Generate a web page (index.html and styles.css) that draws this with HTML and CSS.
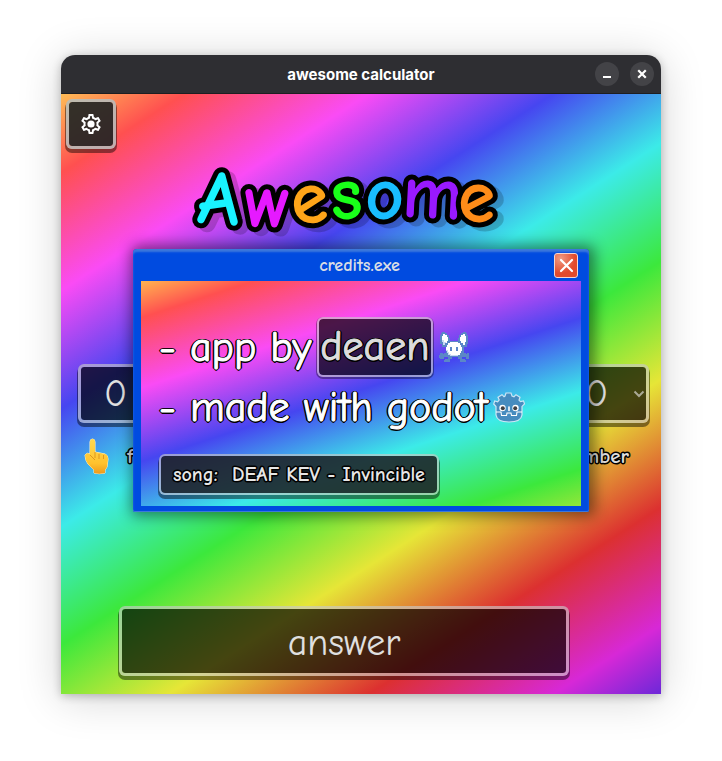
FILE: index.html
```html
<!DOCTYPE html>
<html lang="en">
<head>
<meta charset="utf-8">
<title>awesome calculator</title>
<link rel="stylesheet" href="styles.css">
</head>
<body>
<div class="window">
  <header class="titlebar">
    <h1 class="titlebar-text">awesome calculator</h1>
    <div class="titlebar-actions">
      <button class="round-button" aria-label="Minimize">
        <svg width="24" height="24" viewBox="0 0 24 24"><rect x="8" y="14" width="8" height="2" fill="#fff"/></svg>
      </button>
      <button class="round-button" aria-label="Close">
        <svg width="24" height="24" viewBox="0 0 24 24"><path d="M9 9l6 6M15 9l-6 6" stroke="#fff" stroke-width="2.200" stroke-linecap="square"/></svg>
      </button>
    </div>
  </header>
  <main class="canvas">
    <button class="panel gear" aria-label="Settings">
      <svg width="24" height="24" viewBox="0 0 24 24" fill="#fff"><path fill-rule="evenodd" d="M19.430 12.980c.04-.32.07-.64.07-.98 0-.34-.03-.66-.07-.98l2.110-1.650c.19-.15.24-.42.12-.64l-2-3.460a.5.5 0 0 0-.61-.22l-2.490 1c-.52-.4-1.080-.73-1.690-.98l-.38-2.650A.49.49 0 0 0 14 2h-4c-.25 0-.46.18-.49.42l-.38 2.650c-.61.25-1.170.59-1.690.98l-2.490-1a.5.5 0 0 0-.61.22l-2 3.460c-.13.22-.07.49.12.64l2.110 1.650c-.04.32-.07.65-.07.98s.03.66.07.98l-2.110 1.650c-.19.15-.24.42-.12.64l2 3.460c.12.22.39.3.61.22l2.490-1c.52.4 1.080.73 1.690.98l.38 2.650c.03.24.24.42.49.42h4c.25 0 .46-.18.49-.42l.38-2.650c.61-.25 1.170-.59 1.690-.98l2.490 1c.23.09.49 0 .61-.22l2-3.460c.12-.22.07-.49-.12-.64l-2.110-1.650zm-1.980-1.710c.04.31.05.52.05.73s-.02.43-.05.73l-.14 1.130.89.7 1.080.84-.7 1.210-1.270-.51-1.040-.42-.9.68c-.43.32-.84.56-1.250.73l-1.060.43-.16 1.130-.2 1.350h-1.400l-.19-1.350-.16-1.130-1.060-.43c-.43-.18-.83-.41-1.230-.71l-.91-.7-1.060.43-1.270.51-.7-1.210 1.080-.84.89-.7-.14-1.130c-.03-.31-.05-.54-.05-.74s.02-.43.05-.73l.14-1.130-.89-.7-1.080-.84.7-1.210 1.270.51 1.040.42.9-.68c.43-.32.84-.56 1.250-.73l1.060-.43.16-1.130.2-1.350h1.390l.19 1.350.16 1.130 1.060.43c.43.18.83.41 1.230.71l.91.7 1.060-.43 1.270-.51.7 1.210-1.070.85-.89.7z"/><circle cx="12" cy="12" r="3.600"/></svg>
    </button>
    <svg class="logo" viewBox="184 155 320 90" role="img" aria-label="Awesome">
      <g class="logo-letters">
        <text x="198" y="225" fill="#19f4ff" transform="rotate(4 219 200)">A</text>
        <text x="244" y="228" fill="#e619ff" transform="rotate(1 268 208)">w</text>
        <text x="291" y="224" fill="#ffa519" transform="rotate(-3 311 205)">e</text>
        <text x="330" y="220" fill="#19ff19" transform="rotate(-6 347 200)">s</text>
        <text x="365" y="220" fill="#19beff" transform="rotate(-1 383 200)">o</text>
        <text x="402" y="219" fill="#9919ff" transform="rotate(3 428 200)">m</text>
        <text x="458" y="223" fill="#ff8c19" transform="rotate(2 476 204)">e</text>
      </g>
    </svg>
    <div class="numbers">
      <div class="field">
        <select class="panel number" id="first"><option>0</option></select>
        <label class="outlined hint" for="first">
          <svg width="28" height="38" viewBox="0 0 28 38" aria-hidden="true"><defs><linearGradient id="skin" x1="0" y1="0" x2="0" y2="1"><stop offset="0" stop-color="#ffd94f"/><stop offset=".7" stop-color="#ffc22d"/><stop offset="1" stop-color="#ee9a1c"/></linearGradient></defs><path fill="url(#skin)" stroke="#fff2c8" d="M7 5q0-3 2.500-3T12 5v10l10 2q3 1 3 5l-1 8-2 3v3q-6 1.500-11 0v-3l-6-6q-3-4-3-9 2-3 5-1z"/><path fill="none" stroke="#df971e" d="M7 18l5 5M12 15v6M16 17v5M20.500 18v4"/></svg>
          <span>first</span>
        </label>
      </div>
      <div class="field field-end">
        <select class="panel number number-last" id="last"><option>0</option></select>
        <label class="outlined hint" for="last">number</label>
        <svg class="chevron" width="12" height="8" viewBox="0 0 12 8"><path d="M1.500 1.500L6 6l4.500-4.500" fill="none" stroke="#aaa995" stroke-width="2"/></svg>
      </div>
    </div>
    <input class="panel answer" type="text" aria-label="Answer" value="answer" readonly>

    <section class="dialog" role="dialog" aria-labelledby="credits-title">
      <header class="dialog-bar">
        <h2 class="dialog-title" id="credits-title">credits.exe</h2>
        <button class="dialog-close" aria-label="Close credits">
          <svg width="21" height="21" viewBox="0 0 21 21"><path d="M5 5l11 11M16 5L5 16" stroke="#fff" stroke-width="2.200" stroke-linecap="round"/></svg>
        </button>
      </header>
      <div class="dialog-body">
        <p class="credit">
          <span>- app by</span>
          <a class="panel author" href="#deaen">deaen</a>
          <svg width="30" height="30" viewBox="0 0 30 30" shape-rendering="crispEdges" aria-hidden="true">
            <path fill="#5b87c7" d="M3 0h3v1h2v2h2v3h1v3h8V6h1V3h2V1h2V0h3v1h1v2h1v9h-1v3h-3v6h2v1h1v-1h3v2h1v3h-1v1h-4v-2h-4v2h3v1h1v2h-6v-3h-2v-2h-6v2h-2v3H5v-2h1v-1h3v-2H5v2H1v-1H0v-3h1v-2h3v1h1v-1h2v-6H3v-3H1V3h1V1h1z"/>
            <path fill="#fff" d="M4 2h2v1h2v2h1v4H8v2H6v2H4v-3H3V4h1zM26 2h-2v1h-2v2h-1v4h1v2h2v2h2v-3h1V4h-1z"/>
            <path fill="#fff" d="M11 10h8v1h2v2h1v2h1v4h-1v2h-1v2h-2v1h-8v-1H9v-2H8v-2H7v-4h1v-2h1v-2h2z"/>
            <path fill="#c9d9f4" d="M3 8h2v2h2v1H6v2H4v-3H3zM7 18h2v2h1v2h2v1h7v1h-8v-1H9v-2H8v-2H7z"/>
            <path fill="#5b87c7" d="M11 15h2v4h-2zM17 15h2v4h-2z"/>
          </svg>
        </p>
        <p class="credit">
          <span>- made with godot</span>
          <svg width="32" height="32" viewBox="0 0 32 32" aria-hidden="true">
            <path fill="#478cbf" stroke="#cce5f5" stroke-width="1.200" d="M12 5l1-3 5 0 1 3 2 .7 2-2 4 2.500-1 3 1.500 1.500 3-.8 1 3-2.500 2.500V24q-1 7-13 7T3 24v-8.500L.7 13l1-3 3 .8L6.200 9 5 6.200l4-2.500 2 2z"/>
            <path fill="none" stroke="#fff" stroke-width="1.100" d="M3 21h5l.5 3.500h5L14 22h4l.5 2.500h5L24 21h5"/>
            <path stroke="#fff" stroke-width="1.600" stroke-linecap="round" d="M16 16v3.500"/>
            <circle cx="9.500" cy="17" r="3.200" fill="#fff"/><circle cx="22.500" cy="17" r="3.200" fill="#fff"/>
            <circle cx="9.800" cy="17.200" r="2" fill="#414042"/><circle cx="22.200" cy="17.200" r="2" fill="#414042"/>
          </svg>
        </p>
        <button class="panel song outlined">song:&nbsp; DEAF KEV - Invincible</button>
      </div>
    </section>
  </main>
</div>
</body>
</html>
```
FILE: styles.css
```css
* {
  box-sizing: border-box;
}

body {
  margin: 0;
  padding: 55px 61px 67px;
  background: #fff;
  color: #fff;
  font-family: "Comic Neue", "Noto Sans", sans-serif;
}

h1, h2, p {
  margin: 0;
  font-weight: 400;
}

button, input, select {
  margin: 0;
  padding: 0;
  color: inherit;
  font-family: inherit;
}

svg {
  display: block;
  flex: none;
}

.window {
  border-radius: 14px 14px 0 0;
  box-shadow: 0 2px 10px rgba(0, 0, 0, 0.24), 0 4px 44px rgba(0, 0, 0, 0.18);
}

.titlebar {
  display: grid;
  grid-template-columns: 1fr auto 1fr;
  align-items: center;
  height: 39px;
  padding: 0 7px;
  border-bottom: 1px solid #1e1e21;
  border-radius: 14px 14px 0 0;
  background: #2e2e32;
}

.titlebar-text {
  grid-column: 2;
  font: 700 15px Inter, sans-serif;
}

.titlebar-actions {
  display: flex;
  justify-content: flex-end;
  gap: 11px;
}

.round-button {
  width: 24px;
  height: 24px;
  border: 0;
  border-radius: 50%;
  background: #434347;
}

.canvas {
  position: relative;
  display: flex;
  flex-direction: column;
  min-height: 600px;
  background: linear-gradient(147.4deg, #ffbc55 0%, #ff5050 8%, #fa4bf5 20%, #4646f0 32%, #3cebe8 44%, #3ce83c 56%, #e6e637 68%, #dc3030 81%, #d728d7 93%, #6d28d8 100%);
}

.panel {
  border: 3px solid rgba(200, 200, 200, 0.65);
  border-radius: 6px;
  background: rgba(0, 0, 0, 0.7) padding-box;
  box-shadow: 0 3px 0 1px rgba(0, 0, 0, 0.45);
}

.gear {
  display: grid;
  place-items: center;
  width: 50px;
  height: 50px;
  margin: 5px;
  border-color: rgba(180, 190, 190, 0.85);
  background-color: rgba(30, 35, 35, 0.9);
}

.logo {
  width: 320px;
  align-self: center;
  margin-right: 34px;
}

.logo-letters {
  font-size: 76px;
  font-weight: 700;
  stroke: #000;
  stroke-width: 10px;
  stroke-linejoin: round;
  paint-order: stroke;
  filter: drop-shadow(6px 4px 0 rgba(0, 0, 0, 0.18));
}

.numbers {
  display: flex;
  justify-content: space-between;
  margin: 120px 12px 0 17px;
}

.field {
  position: relative;
  display: flex;
  flex-direction: column;
  gap: 14px;
  width: 190px;
}

.field-end {
  align-items: flex-end;
}

.number {
  appearance: none;
  width: 100%;
  height: 59px;
  padding-left: 23px;
  color: #e0e0e0;
  font-size: 38px;
}

.number-last {
  padding-left: 123px;
}

.chevron {
  position: absolute;
  top: 26px;
  right: 4px;
}

.outlined {
  -webkit-text-stroke: 3px #000;
  paint-order: stroke fill;
}

.hint {
  display: flex;
  align-items: center;
  gap: 16px;
  height: 38px;
  padding: 0 20px 0 5px;
  color: #ddd;
  font-size: 21px;
  font-weight: 700;
}

.answer {
  width: 450px;
  max-width: 90%;
  height: 70px;
  margin: auto 34px 18px 0;
  padding-top: 4px;
  align-self: center;
  color: #e0e0e0;
  font-size: 38px;
  text-align: center;
}

.dialog {
  position: absolute;
  top: 155px;
  left: 12%;
  right: 12%;
  padding: 0 8px 6px;
  border-radius: 4px 4px 2px 2px;
  background: #004be0;
  box-shadow: inset 0 3px 2px #3b78dc, inset 0 -1px 0 #3b78dc, 2px 0 14px 4px rgba(0, 0, 0, 0.45);
}

.dialog-bar {
  display: grid;
  grid-template-columns: 1fr auto 1fr;
  align-items: center;
  height: 32px;
  padding-right: 3px;
}

.dialog-title {
  grid-column: 2;
  color: #d9dde4;
  font-size: 18px;
  font-weight: 700;
}

.dialog-close {
  display: grid;
  place-items: center;
  justify-self: end;
  width: 24px;
  height: 25px;
  border: 1px solid #f6d5cf;
  border-radius: 3px;
  background: radial-gradient(circle at 25% 20%, #f09a82, #e24a2c 60%);
}

.dialog-body {
  display: flex;
  flex-direction: column;
  align-items: flex-start;
  min-height: 225px;
  padding: 36px 18px 11px;
  background: linear-gradient(161.900deg, #ffb450 0%, #ff5050 10%, #fa4bf5 29%, #4646f0 49%, #3cebe8 69%, #3ce83c 90%, #92e63a 100%);
}

.credit {
  display: flex;
  align-items: center;
  gap: 6px;
  height: 60px;
  font-size: 42px;
  white-space: nowrap;
  -webkit-text-stroke: 1px currentColor;
  text-shadow: 1px 1px #000, -1px 1px #000, 1px -1px #000, -1px -1px #000, 0 2px #000, 2px 0 #000, -2px 0 #000, 0 -1px #000;
}

.author {
  padding: 0 1px;
  border-width: 2px;
  color: #ddd;
  line-height: 56px;
  text-decoration: none;
  box-shadow: 0 1px 0 1px rgba(0, 0, 0, 0.35);
}

.song {
  height: 41px;
  margin-top: auto;
  padding: 0 12px;
  border-width: 2px;
  background-color: rgba(30, 32, 36, 0.88);
  color: #e6e6e6;
  font-size: 20px;
  font-weight: 700;
}
```
